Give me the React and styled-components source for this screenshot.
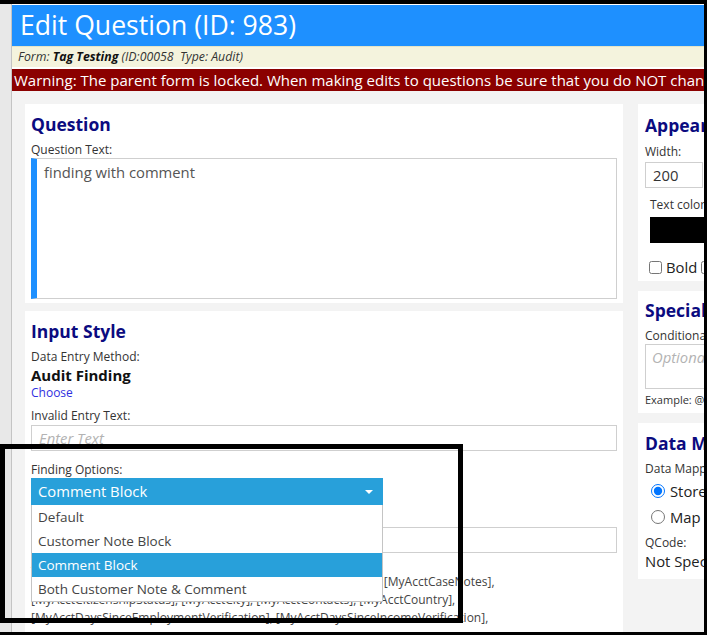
import React from "react";
import styled, { createGlobalStyle } from "styled-components";

const GlobalStyle = createGlobalStyle`
  html, body {
    margin: 0;
    padding: 0;
    background: #fff;
  }
  body {
    font-family: "Open Sans", "Noto Sans", sans-serif;
    color: #222;
  }
`;

const Frame = styled.div`
  position: relative;
  width: 707px;
  height: 635px;
  box-sizing: border-box;
  border-top: 4px solid #000;
  border-right: 3px solid #000;
  border-bottom: 3px solid #000;
  display: flex;
  overflow: hidden;
  background: #fff;
`;

const SideStrip = styled.div`
  width: 11px;
  flex: none;
  background: #e8e8e8;
  border-right: 1px solid #c4c4c4;
`;

const Page = styled.div`
  flex: 1;
  min-width: 0;
  display: flex;
  flex-direction: column;
  background: #f3f3f3;
  border-top: 1px solid #fff;
  overflow: hidden;
`;

const Header = styled.h1`
  flex: none;
  margin: 0;
  height: 41px;
  line-height: 41px;
  padding-left: 8px;
  background: #1e90ff;
  color: #fff;
  font-size: 26.6px;
  font-weight: 400;
  white-space: nowrap;
`;

const FormBar = styled.div`
  flex: none;
  height: 20px;
  line-height: 20px;
  padding-left: 6px;
  background: #f4f3dd;
  border-top: 1px solid #e4e4c8;
  border-bottom: 2px solid #fff;
  font-size: 12.3px;
  font-style: italic;
  color: #333;
  white-space: nowrap;

  b {
    color: #111;
  }
`;

const Warning = styled.div`
  flex: none;
  height: 22px;
  line-height: 22px;
  padding-left: 2px;
  background: #8b0000;
  color: #fff;
  font-size: 15px;
  white-space: nowrap;
  overflow: hidden;
`;

const Body = styled.div`
  flex: none;
  display: flex;
  align-items: flex-start;
  gap: 15px;
  padding: 13px 0 0 13px;
`;

const LeftCol = styled.div`
  width: 598px;
  flex: none;
  display: flex;
  flex-direction: column;
  gap: 8px;
`;

const RightCol = styled.div`
  width: 240px;
  flex: none;
  display: flex;
  flex-direction: column;
  gap: 10px;
`;

const Panel = styled.section`
  background: #fff;
  padding: ${(p) => p.$pad || "8px 6px 4px"};
  display: flex;
  flex-direction: column;
  align-items: flex-start;
  min-height: ${(p) => p.$minH || 0}px;
`;

const Heading = styled.h2`
  margin: 0;
  height: 24px;
  line-height: 24px;
  font-size: 17.5px;
  font-weight: 700;
  color: #0b0b80;
  white-space: nowrap;
`;

const Label = styled.div`
  margin-top: ${(p) => p.$mt || 0}px;
  line-height: 16px;
  font-size: ${(p) => p.$size || 12}px;
  color: #333;
  white-space: nowrap;
  padding-left: ${(p) => p.$indent || 0}px;
`;

const QuestionArea = styled.textarea`
  box-sizing: border-box;
  width: 586px;
  height: 141px;
  margin: 0;
  padding: 3px 7px;
  border: 1px solid #cfcfcf;
  border-left: 6px solid #1e90ff;
  font-family: inherit;
  font-size: 14.8px;
  line-height: 20px;
  color: #555;
  resize: none;
  outline: none;
`;

const TextInput = styled.input`
  box-sizing: border-box;
  width: ${(p) => p.$w || 586}px;
  height: 26px;
  margin: ${(p) => p.$mt || 0}px 0 0 0;
  padding: 0 7px;
  border: 1px solid #cfcfcf;
  font-family: inherit;
  font-size: 14.8px;
  color: #333;
  outline: none;

  &::placeholder {
    color: #b3b3b3;
    font-style: italic;
  }
`;

const BigValue = styled.div`
  line-height: 20px;
  font-size: 15px;
  font-weight: 700;
  color: #111;
`;

const Link = styled.a`
  line-height: 16px;
  font-size: 12px;
  color: #3030e0;
  text-decoration: none;
  cursor: pointer;
`;

const SelectWrap = styled.div`
  position: relative;
  width: 352px;
  z-index: 5;
`;

const SelectBox = styled.div`
  height: 27px;
  line-height: 27px;
  padding: 0 7px;
  background: #28a0da;
  color: #fff;
  font-size: 14.8px;
  display: flex;
  justify-content: space-between;
  align-items: center;
`;

const Caret = styled.span`
  width: 0;
  height: 0;
  margin-right: 3px;
  border-left: 4px solid transparent;
  border-right: 4px solid transparent;
  border-top: 4px solid #fff;
`;

const OptionList = styled.ul`
  position: absolute;
  top: 100%;
  left: 0;
  right: 0;
  margin: 0;
  padding: 0;
  list-style: none;
  background: #fff;
  border: 1px solid #c4c4c4;
  border-top: none;
  box-sizing: border-box;
`;

const Option = styled.li`
  height: 24px;
  line-height: 24px;
  padding: 0 6px;
  font-size: 13.5px;
  color: ${(p) => (p.$active ? "#fff" : "#444")};
  background: ${(p) => (p.$active ? "#28a0da" : "transparent")};
  white-space: nowrap;
`;

const Tags = styled.div`
  margin-top: 2px;
  font-size: 12px;
  line-height: 18px;
  color: #444;
  white-space: nowrap;
`;

const Swatch = styled.div`
  margin: 4px 0 0 5px;
  width: 200px;
  height: 26px;
  background: #000;
`;

const CheckRow = styled.label`
  margin-top: 14px;
  display: flex;
  align-items: center;
  height: 20px;
  font-size: 14.8px;
  color: #222;
  white-space: nowrap;

  input {
    margin: 0 4px 0 4px;
    width: 13px;
    height: 13px;
  }
`;

const SmallArea = styled.textarea`
  box-sizing: border-box;
  width: 200px;
  height: 45px;
  margin: 0;
  padding: 2px 6px;
  border: 1px solid #cfcfcf;
  font-family: inherit;
  font-size: 14.8px;
  resize: none;
  outline: none;

  &::placeholder {
    color: #b3b3b3;
    font-style: italic;
  }
`;

const RadioRow = styled.label`
  display: flex;
  align-items: center;
  height: 22px;
  margin-top: ${(p) => p.$mt || 0}px;
  font-size: 14.8px;
  color: #222;
  white-space: nowrap;

  input {
    margin: 0 5px 0 6px;
    width: 14px;
    height: 14px;
  }
`;

const PlainValue = styled.div`
  line-height: 20px;
  font-size: 14.8px;
  color: #222;
  white-space: nowrap;
`;

const Annotation = styled.div`
  position: absolute;
  left: 0;
  top: 440px;
  width: 463px;
  height: 179px;
  box-sizing: border-box;
  border: 5px solid #000;
  pointer-events: none;
  z-index: 10;
`;

const findingOptions = [
  "Default",
  "Customer Note Block",
  "Comment Block",
  "Both Customer Note & Comment",
];

export default function App() {
  return (
    <>
      <GlobalStyle />
      <Frame>
        <SideStrip />
        <Page>
          <Header>Edit Question (ID: 983)</Header>
          <FormBar>
            Form: <b>Tag Testing</b> (ID:00058&nbsp;&nbsp;Type: Audit)
          </FormBar>
          <Warning>
            Warning: The parent form is locked. When making edits to questions be sure that you do NOT change the meaning of the question.
          </Warning>
          <Body>
            <LeftCol>
              <Panel>
                <Heading>Question</Heading>
                <Label $mt={6}>Question Text:</Label>
                <QuestionArea readOnly defaultValue="finding with comment" />
              </Panel>

              <Panel $minH={330}>
                <Heading>Input Style</Heading>
                <Label $mt={6}>Data Entry Method:</Label>
                <BigValue>Audit Finding</BigValue>
                <Link>Choose</Link>
                <Label $mt={7}>Invalid Entry Text:</Label>
                <TextInput $mt={1} placeholder="Enter Text" />
                <Label $mt={11}>Finding Options:</Label>
                <SelectWrap>
                  <SelectBox>
                    Comment Block
                    <Caret />
                  </SelectBox>
                  <OptionList>
                    {findingOptions.map((o) => (
                      <Option key={o} $active={o === "Comment Block"}>
                        {o}
                      </Option>
                    ))}
                  </OptionList>
                </SelectWrap>
                <Label $mt={3}>Comment Label:</Label>
                <TextInput $mt={3} />
                <Tags>
                  Available tags:
                  <br />
                  [MyAcctBalance], [MyAcctCaseIds], [MyAcctCaseManagerType], [MyAcctCaseNotes],
                  <br />
                  [MyAcctCitizenshipStatus], [MyAcctCity], [MyAcctContacts], [MyAcctCountry],
                  <br />
                  [MyAcctDaysSinceEmploymentVerification], [MyAcctDaysSinceIncomeVerification],
                </Tags>
              </Panel>
            </LeftCol>

            <RightCol>
              <Panel $pad="9px 7px 4px">
                <Heading>Appearance</Heading>
                <Label $mt={7}>Width:</Label>
                <TextInput $w={58} $mt={2} defaultValue="200" />
                <Label $mt={9} $indent={5}>Text color:</Label>
                <Swatch />
                <CheckRow>
                  <input type="checkbox" />
                  Bold
                  <input type="checkbox" />
                  Italic
                </CheckRow>
              </Panel>

              <Panel $pad="7px 7px 5px">
                <Heading>Special Settings</Heading>
                <Label $mt={6}>Conditional Display:</Label>
                <SmallArea placeholder="Optional" />
                <Label $mt={3} $size={11}>Example: @Q123 = "Yes"</Label>
              </Panel>

              <Panel $pad="8px 7px 8px">
                <Heading>Data Mapping</Heading>
                <Label $mt={6}>Data Mapping:</Label>
                <RadioRow $mt={3}>
                  <input type="radio" name="map" defaultChecked />
                  Store in QCode
                </RadioRow>
                <RadioRow $mt={4}>
                  <input type="radio" name="map" />
                  Map to field
                </RadioRow>
                <Label $mt={7}>QCode:</Label>
                <PlainValue>Not Specified</PlainValue>
              </Panel>
            </RightCol>
          </Body>
        </Page>
        <Annotation />
      </Frame>
    </>
  );
}
